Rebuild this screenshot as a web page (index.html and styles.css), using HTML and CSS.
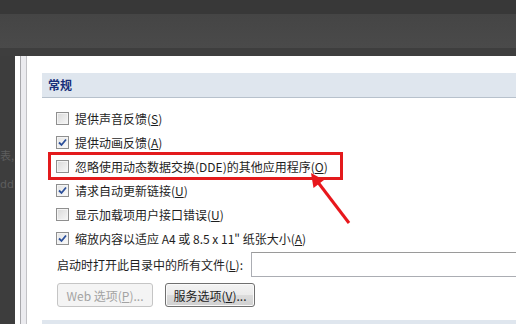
FILE: index.html
```html
<!DOCTYPE html>
<html lang="zh-CN">
<head>
    <meta charset="UTF-8">
    <title>常规选项</title>
    <link rel="stylesheet" href="styles.css">
</head>
<body>
    <div class="titlebar"></div>
    <div class="toolbar"></div>
    <div class="gap-strip"></div>

    <div class="workspace">
        <div class="backdrop">
            <div class="ghost ghost-1">表,</div>
            <div class="ghost ghost-2">dd</div>
        </div>

        <div class="dialog">
            <div class="sidebar"></div>
            <div class="content">
                <div class="section-title">常规</div>

                <div class="options">
                    <div class="opt">
                        <span class="box"></span>
                        <span>提供声音反馈(<u>S</u>)</span>
                    </div>
                    <div class="opt">
                        <span class="box checked">
                            <svg viewBox="0 0 11 11" width="11" height="11"><path d="M2 5.5 L4.5 8 L9 2.5" fill="none" stroke="#2b4f9a" stroke-width="1.8"/></svg>
                        </span>
                        <span>提供动画反馈(<u>A</u>)</span>
                    </div>
                    <div class="opt marked">
                        <span class="box"></span>
                        <span>忽略使用动态数据交换(DDE)的其他应用程序(<u>O</u>)</span>
                    </div>
                    <div class="opt">
                        <span class="box checked">
                            <svg viewBox="0 0 11 11" width="11" height="11"><path d="M2 5.5 L4.5 8 L9 2.5" fill="none" stroke="#2b4f9a" stroke-width="1.8"/></svg>
                        </span>
                        <span>请求自动更新链接(<u>U</u>)</span>
                    </div>
                    <div class="opt">
                        <span class="box"></span>
                        <span>显示加载项用户接口错误(<u>U</u>)</span>
                    </div>
                    <div class="opt">
                        <span class="box checked">
                            <svg viewBox="0 0 11 11" width="11" height="11"><path d="M2 5.5 L4.5 8 L9 2.5" fill="none" stroke="#2b4f9a" stroke-width="1.8"/></svg>
                        </span>
                        <span>缩放内容以适应 A4 或 8.5 x 11" 纸张大小(<u>A</u>)</span>
                    </div>
                </div>

                <div class="path-row">
                    <label class="path-label">启动时打开此目录中的所有文件(<u>L</u>):</label>
                    <div class="path-input"></div>
                </div>

                <div class="buttons">
                    <button class="btn disabled">Web 选项(<u>P</u>)...</button>
                    <button class="btn">服务选项(<u>V</u>)...</button>
                </div>

                <div class="section-title next"></div>
            </div>
        </div>
    </div>

    <svg class="arrow" width="516" height="324" viewBox="0 0 516 324">
        <line x1="349" y1="223" x2="317" y2="181" stroke="#e8171c" stroke-width="3"/>
        <polygon points="311,173 313.5,188 324,180" fill="#e8171c"/>
    </svg>
</body>
</html>
```

FILE: styles.css
```css
* {
    margin: 0;
    padding: 0;
    box-sizing: border-box;
}

body {
    width: 516px;
    height: 324px;
    overflow: hidden;
    background: #3c3c3c;
    font-family: "Noto Sans CJK SC", "Liberation Sans", sans-serif;
    font-size: 12px;
    color: #1e1e1e;
    position: relative;
}

.titlebar {
    height: 14px;
    background: #383838;
}

.toolbar {
    height: 34px;
    background: linear-gradient(180deg, #454545, #4a4a4a);
}

.gap-strip {
    height: 8px;
    background: #3e3e3e;
}

.workspace {
    display: flex;
    height: 268px;
    overflow: hidden;
}

.backdrop {
    width: 15px;
    flex-shrink: 0;
    background: #3d3d3d;
    overflow: hidden;
    color: #5e5e5e;
    font-size: 11px;
}

.ghost {
    white-space: nowrap;
    line-height: 14px;
}

.ghost-1 {
    margin-top: 92px;
}

.ghost-2 {
    margin-top: 16px;
    font-family: "DejaVu Sans", sans-serif;
}

.dialog {
    flex: 1;
    display: flex;
    background: #fff;
    overflow: hidden;
}

.sidebar {
    width: 7px;
    margin-left: 5px;
    background: #ebebef;
    border-left: 1px solid #a8a8ac;
    border-right: 1px solid #c2c2c6;
}

.content {
    flex: 1;
    padding: 17px 0 0 15px;
}

.section-title {
    height: 25px;
    line-height: 24px;
    padding-left: 6px;
    background: #dfe6ee;
    border-bottom: 1px solid #b7c1cc;
    color: #172f7a;
    font-weight: bold;
    font-size: 12px;
}

.section-title.next {
    margin-top: 13px;
    border-bottom: none;
}

.options {
    margin-top: 8px;
}

.opt {
    display: flex;
    align-items: center;
    height: 24px;
    padding-left: 14px;
    width: max-content;
    white-space: nowrap;
}

/* red highlight round the DDE option */
.opt.marked {
    margin-left: 8px;
    padding-left: 6px;
    padding-right: 13px;
    outline: 3px solid #e31a1c;
    outline-offset: -1px;
}

.box {
    width: 13px;
    height: 13px;
    margin-right: 6px;
    border: 1px solid #8f8f8f;
    background: linear-gradient(135deg, #d9d9d9, #f7f7f7);
    box-shadow: inset 0 0 0 1px #f4f4f4;
    display: flex;
    align-items: center;
    justify-content: center;
}

.box.checked {
    background: linear-gradient(135deg, #e4e4e4, #fbfbfb);
}

.path-row {
    display: flex;
    align-items: center;
    height: 27px;
    margin-top: 1px;
    padding-left: 15px;
}

.path-label {
    width: 194px;
    white-space: nowrap;
}

.path-input {
    flex: 1;
    height: 25px;
    border: 1px solid #abadb3;
    border-top-color: #9a9a9a;
    border-right: none;
    background: #fff;
}

.buttons {
    display: flex;
    gap: 12px;
    margin-top: 5px;
    padding-left: 15px;
}

.btn {
    height: 24px;
    padding: 0 6px;
    font-family: inherit;
    font-size: 12px;
    color: #1e1e1e;
    border: 1px solid #707070;
    border-radius: 3px;
    background: linear-gradient(180deg, #f3f3f3 0%, #ebebeb 50%, #dcdcdc 51%, #d0d0d0 100%);
    box-shadow: inset 0 0 0 1px #fafafa;
}

.btn:first-child {
    width: 96px;
}

.btn:last-child {
    width: 90px;
}

.btn.disabled {
    color: #a3a3a3;
    border-color: #c5c5c5;
    background: #f4f4f4;
    box-shadow: none;
}

.arrow {
    position: absolute;
    top: 0;
    left: 0;
    pointer-events: none;
}
```
